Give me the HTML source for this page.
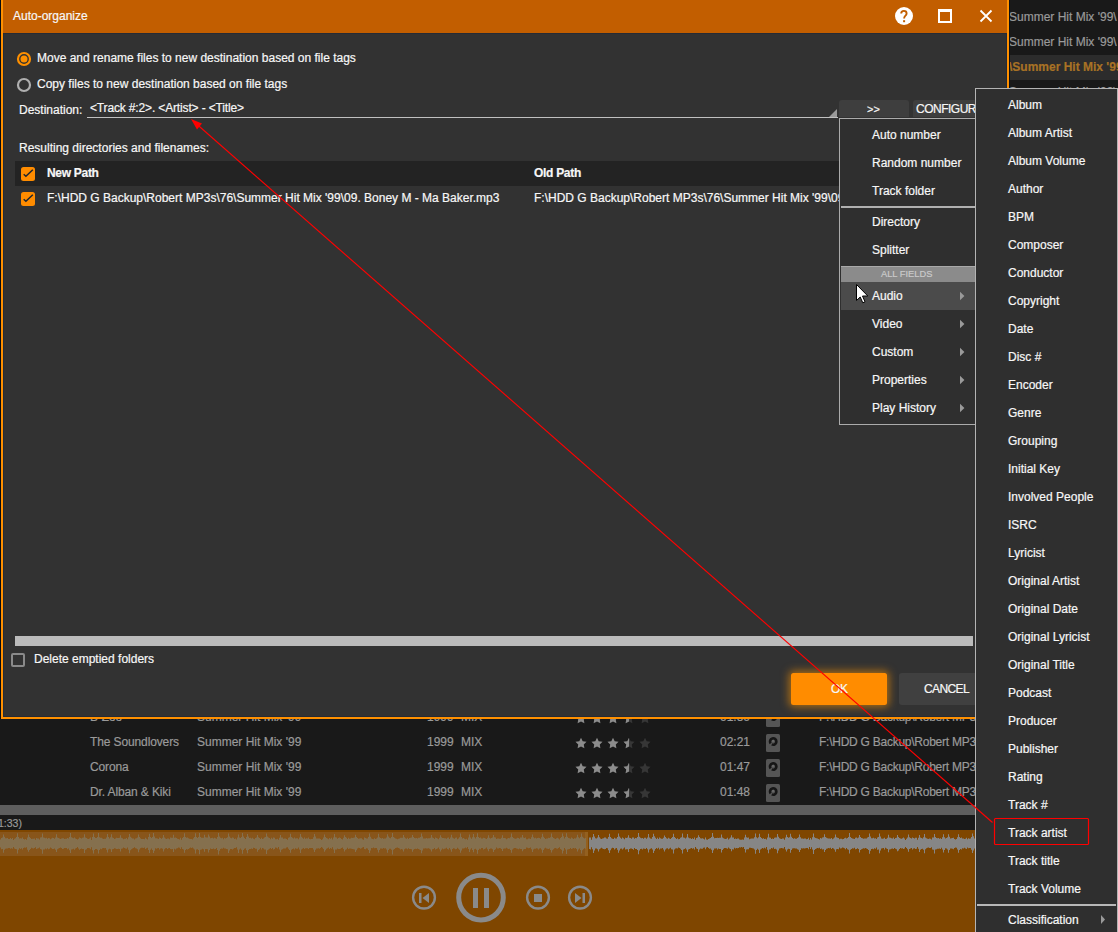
<!DOCTYPE html><html><head><meta charset="utf-8"><style>
*{margin:0;padding:0;box-sizing:border-box}
html,body{width:1118px;height:932px;overflow:hidden;background:#191919;font-family:"Liberation Sans",sans-serif;font-size:12px;color:#f7f7f7}
.t{position:absolute;line-height:14px;white-space:nowrap;-webkit-text-stroke:0.2px currentColor}
.g{color:#9a9a9a}
.b{font-weight:bold}
svg{position:absolute;overflow:visible}
</style></head><body>
<div class="t g" style="left:1009px;top:10px;letter-spacing:0">Summer Hit Mix '99\</div>
<div class="t g" style="left:1009px;top:35px;letter-spacing:0">Summer Hit Mix '99\</div>
<div style="position:absolute;left:1009px;top:55px;width:109px;height:25px;background:#2c2c2c"></div>
<div class="t b" style="left:1009px;top:60px;color:#a87225">\Summer Hit Mix '99\</div>
<div class="t g" style="left:1009px;top:85px;letter-spacing:0">Summer Hit Mix '99\</div>
<div class="t g" style="left:90px;top:710px;letter-spacing:-0.12px">B-Zoo</div>
<div class="t g" style="left:197px;top:710px;">Summer Hit Mix '99</div>
<div class="t g" style="left:427px;top:710px;">1999</div>
<div class="t g" style="left:461px;top:710px;">MIX</div>
<div class="t g" style="left:720px;top:710px;">01:50</div>
<div class="t g" style="left:819px;top:710px;letter-spacing:-0.25px">F:\HDD G Backup\Robert MP3s\76\Summer Hit Mix</div>
<div class="t g" style="left:90px;top:735px;letter-spacing:-0.12px">The Soundlovers</div>
<div class="t g" style="left:197px;top:735px;">Summer Hit Mix '99</div>
<div class="t g" style="left:427px;top:735px;">1999</div>
<div class="t g" style="left:461px;top:735px;">MIX</div>
<div class="t g" style="left:720px;top:735px;">02:21</div>
<div class="t g" style="left:819px;top:735px;letter-spacing:-0.25px">F:\HDD G Backup\Robert MP3s\76\Summer Hit Mix</div>
<div class="t g" style="left:90px;top:760px;letter-spacing:-0.12px">Corona</div>
<div class="t g" style="left:197px;top:760px;">Summer Hit Mix '99</div>
<div class="t g" style="left:427px;top:760px;">1999</div>
<div class="t g" style="left:461px;top:760px;">MIX</div>
<div class="t g" style="left:720px;top:760px;">01:47</div>
<div class="t g" style="left:819px;top:760px;letter-spacing:-0.25px">F:\HDD G Backup\Robert MP3s\76\Summer Hit Mix</div>
<div class="t g" style="left:90px;top:785px;letter-spacing:-0.12px">Dr. Alban &amp; Kiki</div>
<div class="t g" style="left:197px;top:785px;">Summer Hit Mix '99</div>
<div class="t g" style="left:427px;top:785px;">1999</div>
<div class="t g" style="left:461px;top:785px;">MIX</div>
<div class="t g" style="left:720px;top:785px;">01:48</div>
<div class="t g" style="left:819px;top:785px;letter-spacing:-0.25px">F:\HDD G Backup\Robert MP3s\76\Summer Hit Mix</div>
<svg style="left:0;top:0" width="1118" height="932"><polygon points="581.00,712.70 582.70,716.15 586.52,716.71 583.76,719.40 584.41,723.19 581.00,721.40 577.59,723.19 578.24,719.40 575.48,716.71 579.30,716.15" fill="#8c8c8c"/><polygon points="597.00,712.70 598.70,716.15 602.52,716.71 599.76,719.40 600.41,723.19 597.00,721.40 593.59,723.19 594.24,719.40 591.48,716.71 595.30,716.15" fill="#8c8c8c"/><polygon points="613.00,712.70 614.70,716.15 618.52,716.71 615.76,719.40 616.41,723.19 613.00,721.40 609.59,723.19 610.24,719.40 607.48,716.71 611.30,716.15" fill="#8c8c8c"/><defs><clipPath id="hc721"><rect x="622" y="710.5" width="7" height="16"/></clipPath></defs><polygon points="629.00,712.70 630.70,716.15 634.52,716.71 631.76,719.40 632.41,723.19 629.00,721.40 625.59,723.19 626.24,719.40 623.48,716.71 627.30,716.15" fill="#363636"/><g clip-path="url(#hc721)"><polygon points="629.00,712.70 630.70,716.15 634.52,716.71 631.76,719.40 632.41,723.19 629.00,721.40 625.59,723.19 626.24,719.40 623.48,716.71 627.30,716.15" fill="#8c8c8c"/></g><polygon points="645.00,712.70 646.70,716.15 650.52,716.71 647.76,719.40 648.41,723.19 645.00,721.40 641.59,723.19 642.24,719.40 639.48,716.71 643.30,716.15" fill="#363636"/><rect x="766" y="709" width="14" height="18" rx="1.5" fill="#555"/><path d="M770.6,718.4 A3.2,3.2 0 1 1 771.8,719.4" fill="none" stroke="#161616" stroke-width="2.6"/><rect x="772.3" y="715.2" width="1.5" height="1.5" fill="#777"/><polygon points="581.00,737.70 582.70,741.15 586.52,741.71 583.76,744.40 584.41,748.19 581.00,746.40 577.59,748.19 578.24,744.40 575.48,741.71 579.30,741.15" fill="#8c8c8c"/><polygon points="597.00,737.70 598.70,741.15 602.52,741.71 599.76,744.40 600.41,748.19 597.00,746.40 593.59,748.19 594.24,744.40 591.48,741.71 595.30,741.15" fill="#8c8c8c"/><polygon points="613.00,737.70 614.70,741.15 618.52,741.71 615.76,744.40 616.41,748.19 613.00,746.40 609.59,748.19 610.24,744.40 607.48,741.71 611.30,741.15" fill="#8c8c8c"/><defs><clipPath id="hc746"><rect x="622" y="735.5" width="7" height="16"/></clipPath></defs><polygon points="629.00,737.70 630.70,741.15 634.52,741.71 631.76,744.40 632.41,748.19 629.00,746.40 625.59,748.19 626.24,744.40 623.48,741.71 627.30,741.15" fill="#363636"/><g clip-path="url(#hc746)"><polygon points="629.00,737.70 630.70,741.15 634.52,741.71 631.76,744.40 632.41,748.19 629.00,746.40 625.59,748.19 626.24,744.40 623.48,741.71 627.30,741.15" fill="#8c8c8c"/></g><polygon points="645.00,737.70 646.70,741.15 650.52,741.71 647.76,744.40 648.41,748.19 645.00,746.40 641.59,748.19 642.24,744.40 639.48,741.71 643.30,741.15" fill="#363636"/><rect x="766" y="734" width="14" height="18" rx="1.5" fill="#555"/><path d="M770.6,743.4 A3.2,3.2 0 1 1 771.8,744.4" fill="none" stroke="#161616" stroke-width="2.6"/><rect x="772.3" y="740.2" width="1.5" height="1.5" fill="#777"/><polygon points="581.00,762.70 582.70,766.15 586.52,766.71 583.76,769.40 584.41,773.19 581.00,771.40 577.59,773.19 578.24,769.40 575.48,766.71 579.30,766.15" fill="#8c8c8c"/><polygon points="597.00,762.70 598.70,766.15 602.52,766.71 599.76,769.40 600.41,773.19 597.00,771.40 593.59,773.19 594.24,769.40 591.48,766.71 595.30,766.15" fill="#8c8c8c"/><polygon points="613.00,762.70 614.70,766.15 618.52,766.71 615.76,769.40 616.41,773.19 613.00,771.40 609.59,773.19 610.24,769.40 607.48,766.71 611.30,766.15" fill="#8c8c8c"/><defs><clipPath id="hc771"><rect x="622" y="760.5" width="7" height="16"/></clipPath></defs><polygon points="629.00,762.70 630.70,766.15 634.52,766.71 631.76,769.40 632.41,773.19 629.00,771.40 625.59,773.19 626.24,769.40 623.48,766.71 627.30,766.15" fill="#363636"/><g clip-path="url(#hc771)"><polygon points="629.00,762.70 630.70,766.15 634.52,766.71 631.76,769.40 632.41,773.19 629.00,771.40 625.59,773.19 626.24,769.40 623.48,766.71 627.30,766.15" fill="#8c8c8c"/></g><polygon points="645.00,762.70 646.70,766.15 650.52,766.71 647.76,769.40 648.41,773.19 645.00,771.40 641.59,773.19 642.24,769.40 639.48,766.71 643.30,766.15" fill="#363636"/><rect x="766" y="759" width="14" height="18" rx="1.5" fill="#555"/><path d="M770.6,768.4 A3.2,3.2 0 1 1 771.8,769.4" fill="none" stroke="#161616" stroke-width="2.6"/><rect x="772.3" y="765.2" width="1.5" height="1.5" fill="#777"/><polygon points="581.00,787.70 582.70,791.15 586.52,791.71 583.76,794.40 584.41,798.19 581.00,796.40 577.59,798.19 578.24,794.40 575.48,791.71 579.30,791.15" fill="#8c8c8c"/><polygon points="597.00,787.70 598.70,791.15 602.52,791.71 599.76,794.40 600.41,798.19 597.00,796.40 593.59,798.19 594.24,794.40 591.48,791.71 595.30,791.15" fill="#8c8c8c"/><polygon points="613.00,787.70 614.70,791.15 618.52,791.71 615.76,794.40 616.41,798.19 613.00,796.40 609.59,798.19 610.24,794.40 607.48,791.71 611.30,791.15" fill="#8c8c8c"/><defs><clipPath id="hc796"><rect x="622" y="785.5" width="7" height="16"/></clipPath></defs><polygon points="629.00,787.70 630.70,791.15 634.52,791.71 631.76,794.40 632.41,798.19 629.00,796.40 625.59,798.19 626.24,794.40 623.48,791.71 627.30,791.15" fill="#363636"/><g clip-path="url(#hc796)"><polygon points="629.00,787.70 630.70,791.15 634.52,791.71 631.76,794.40 632.41,798.19 629.00,796.40 625.59,798.19 626.24,794.40 623.48,791.71 627.30,791.15" fill="#8c8c8c"/></g><polygon points="645.00,787.70 646.70,791.15 650.52,791.71 647.76,794.40 648.41,798.19 645.00,796.40 641.59,798.19 642.24,794.40 639.48,791.71 643.30,791.15" fill="#363636"/><rect x="766" y="784" width="14" height="18" rx="1.5" fill="#555"/><path d="M770.6,793.4 A3.2,3.2 0 1 1 771.8,794.4" fill="none" stroke="#161616" stroke-width="2.6"/><rect x="772.3" y="790.2" width="1.5" height="1.5" fill="#777"/></svg>
<div style="position:absolute;left:0px;top:805px;width:975px;height:10px;background:#5e5e5e"></div>
<div class="t g" style="left:-2px;top:816px;font-size:10.5px">1:33)</div>
<div style="position:absolute;left:0px;top:830px;width:975px;height:102px;background:#7f4600"></div>
<div style="position:absolute;left:0px;top:832px;width:588px;height:24px;background:#88551a"></div>
<div style="position:absolute;left:585px;top:832px;width:3px;height:24px;background:#93601f"></div>
<svg style="left:0;top:0" width="1118" height="932"><path d="M0,839.6 1,839.6 1,837.9 2,837.9 2,837.5 3,837.5 3,834.4 4,834.4 4,836.7 5,836.7 5,838.2 6,838.2 6,838.3 7,838.3 7,838.0 8,838.0 8,839.1 9,839.1 9,839.1 10,839.1 10,837.9 11,837.9 11,838.9 12,838.9 12,838.1 13,838.1 13,839.9 14,839.9 14,838.8 15,838.8 15,838.2 16,838.2 16,837.1 17,837.1 17,833.3 18,833.3 18,837.0 19,837.0 19,838.4 20,838.4 20,838.2 21,838.2 21,838.6 22,838.6 22,837.6 23,837.6 23,839.0 24,839.0 24,839.4 25,839.4 25,838.9 26,838.9 26,839.8 27,839.8 27,837.5 28,837.5 28,834.6 29,834.6 29,837.0 30,837.0 30,838.0 31,838.0 31,839.0 32,839.0 32,838.8 33,838.8 33,838.8 34,838.8 34,838.5 35,838.5 35,839.8 36,839.8 36,837.9 37,837.9 37,838.6 38,838.6 38,838.4 39,838.4 39,839.5 40,839.5 40,837.5 41,837.5 41,837.3 42,837.3 42,833.6 43,833.6 43,837.4 44,837.4 44,837.7 45,837.7 45,838.2 46,838.2 46,837.7 47,837.7 47,838.7 48,838.7 48,837.9 49,837.9 49,838.3 50,838.3 50,839.2 51,839.2 51,838.5 52,838.5 52,837.8 53,837.8 53,837.9 54,837.9 54,838.7 55,838.7 55,837.5 56,837.5 56,834.2 57,834.2 57,837.4 58,837.4 58,838.0 59,838.0 59,838.5 60,838.5 60,839.1 61,839.1 61,838.6 62,838.6 62,838.2 63,838.2 63,838.3 64,838.3 64,839.0 65,839.0 65,838.8 66,838.8 66,838.7 67,838.7 67,838.0 68,838.0 68,838.6 69,838.6 69,837.0 70,837.0 70,832.9 71,832.9 71,837.2 72,837.2 72,837.8 73,837.8 73,838.2 74,838.2 74,837.5 75,837.5 75,838.5 76,838.5 76,839.0 77,839.0 77,839.5 78,839.5 78,838.7 79,838.7 79,837.5 80,837.5 80,838.1 81,838.1 81,838.6 82,838.6 82,837.8 83,837.8 83,837.5 84,837.5 84,834.2 85,834.2 85,837.6 86,837.6 86,838.1 87,838.1 87,838.8 88,838.8 88,839.0 89,839.0 89,838.6 90,838.6 90,837.6 91,837.6 91,839.9 92,839.9 92,837.0 93,837.0 93,833.5 94,833.5 94,836.9 95,836.9 95,838.0 96,838.0 96,838.0 97,838.0 97,837.1 98,837.1 98,832.9 99,832.9 99,837.2 100,837.2 100,837.8 101,837.8 101,837.8 102,837.8 102,838.5 103,838.5 103,839.1 104,839.1 104,838.7 105,838.7 105,838.7 106,838.7 106,837.5 107,837.5 107,834.0 108,834.0 108,836.9 109,836.9 109,838.4 110,838.4 110,837.3 111,837.3 111,834.3 112,834.3 112,837.4 113,837.4 113,838.0 114,838.0 114,838.9 115,838.9 115,838.5 116,838.5 116,837.8 117,837.8 117,838.0 118,838.0 118,838.0 119,838.0 119,837.7 120,837.7 120,835.3 121,835.3 121,837.8 122,837.8 122,838.3 123,838.3 123,839.2 124,839.2 124,838.8 125,838.8 125,838.7 126,838.7 126,838.1 127,838.1 127,839.3 128,839.3 128,837.2 129,837.2 129,834.0 130,834.0 130,836.8 131,836.8 131,837.7 132,837.7 132,838.5 133,838.5 133,838.6 134,838.6 134,839.4 135,839.4 135,838.5 136,838.5 136,838.2 137,838.2 137,837.5 138,837.5 138,834.4 139,834.4 139,837.1 140,837.1 140,838.2 141,838.2 141,839.0 142,839.0 142,838.9 143,838.9 143,839.0 144,839.0 144,839.3 145,839.3 145,837.7 146,837.7 146,838.7 147,838.7 147,839.4 148,839.4 148,837.0 149,837.0 149,833.8 150,833.8 150,837.0 151,837.0 151,838.0 152,838.0 152,837.0 153,837.0 153,833.0 154,833.0 154,836.4 155,836.4 155,838.2 156,838.2 156,838.3 157,838.3 157,838.5 158,838.5 158,839.0 159,839.0 159,837.6 160,837.6 160,838.0 161,838.0 161,838.7 162,838.7 162,837.7 163,837.7 163,835.1 164,835.1 164,837.5 165,837.5 165,838.5 166,838.5 166,838.9 167,838.9 167,838.4 168,838.4 168,838.6 169,838.6 169,839.2 170,839.2 170,837.6 171,837.6 171,837.8 172,837.8 172,837.7 173,837.7 173,834.7 174,834.7 174,837.8 175,837.8 175,837.6 176,837.6 176,838.1 177,838.1 177,838.7 178,838.7 178,839.1 179,839.1 179,839.4 180,839.4 180,837.8 181,837.8 181,839.8 182,839.8 182,837.9 183,837.9 183,837.1 184,837.1 184,833.2 185,833.2 185,837.0 186,837.0 186,837.8 187,837.8 187,837.6 188,837.6 188,838.2 189,838.2 189,838.7 190,838.7 190,839.0 191,839.0 191,839.1 192,839.1 192,839.4 193,839.4 193,838.3 194,838.3 194,837.0 195,837.0 195,833.2 196,833.2 196,837.1 197,837.1 197,837.9 198,837.9 198,837.1 199,837.1 199,833.1 200,833.1 200,837.0 201,837.0 201,837.8 202,837.8 202,837.7 203,837.7 203,837.7 204,837.7 204,834.8 205,834.8 205,837.3 206,837.3 206,837.5 207,837.5 207,837.4 208,837.4 208,834.5 209,834.5 209,836.6 210,836.6 210,838.3 211,838.3 211,837.9 212,837.9 212,837.7 213,837.7 213,838.5 214,838.5 214,837.8 215,837.8 215,838.3 216,838.3 216,838.7 217,838.7 217,837.0 218,837.0 218,832.9 219,832.9 219,836.4 220,836.4 220,837.7 221,837.7 221,838.2 222,838.2 222,837.7 223,837.7 223,839.3 224,839.3 224,838.1 225,838.1 225,838.5 226,838.5 226,837.9 227,837.9 227,837.2 228,837.2 228,833.4 229,833.4 229,836.6 230,836.6 230,837.8 231,837.8 231,838.2 232,838.2 232,837.6 233,837.6 233,837.8 234,837.8 234,839.0 235,839.0 235,838.6 236,838.6 236,839.6 237,839.6 237,837.4 238,837.4 238,834.5 239,834.5 239,837.4 240,837.4 240,838.0 241,838.0 241,837.1 242,837.1 242,833.1 243,833.1 243,836.6 244,836.6 244,837.9 245,837.9 245,838.9 246,838.9 246,837.1 247,837.1 247,833.9 248,833.9 248,836.5 249,836.5 249,838.1 250,838.1 250,837.8 251,837.8 251,838.5 252,838.5 252,837.7 253,837.7 253,838.8 254,838.8 254,839.2 255,839.2 255,838.0 256,838.0 256,837.6 257,837.6 257,835.1 258,835.1 258,837.3 259,837.3 259,837.9 260,837.9 260,839.0 261,839.0 261,837.8 262,837.8 262,839.1 263,839.1 263,838.6 264,838.6 264,837.5 265,837.5 265,837.1 266,837.1 266,833.4 267,833.4 267,836.5 268,836.5 268,837.6 269,837.6 269,838.1 270,838.1 270,839.2 271,839.2 271,837.7 272,837.7 272,838.7 273,838.7 273,837.6 274,837.6 274,837.7 275,837.7 275,839.2 276,839.2 276,839.3 277,839.3 277,838.8 278,838.8 278,839.7 279,839.7 279,837.7 280,837.7 280,834.9 281,834.9 281,837.4 282,837.4 282,837.5 283,837.5 283,838.8 284,838.8 284,838.5 285,838.5 285,838.5 286,838.5 286,839.1 287,839.1 287,839.7 288,839.7 288,837.7 289,837.7 289,837.2 290,837.2 290,833.7 291,833.7 291,836.9 292,836.9 292,837.8 293,837.8 293,838.4 294,838.4 294,837.5 295,837.5 295,838.6 296,838.6 296,838.2 297,838.2 297,838.3 298,838.3 298,839.3 299,839.3 299,837.4 300,837.4 300,834.1 301,834.1 301,836.7 302,836.7 302,837.8 303,837.8 303,838.8 304,838.8 304,837.5 305,837.5 305,838.8 306,838.8 306,838.3 307,838.3 307,838.4 308,838.4 308,837.6 309,837.6 309,839.0 310,839.0 310,839.2 311,839.2 311,839.1 312,839.1 312,839.1 313,839.1 313,837.3 314,837.3 314,834.0 315,834.0 315,836.5 316,836.5 316,838.5 317,838.5 317,838.5 318,838.5 318,838.4 319,838.4 319,838.5 320,838.5 320,838.9 321,838.9 321,839.9 322,839.9 322,839.3 323,839.3 323,837.4 324,837.4 324,834.6 325,834.6 325,837.0 326,837.0 326,838.0 327,838.0 327,838.4 328,838.4 328,839.2 329,839.2 329,838.0 330,838.0 330,838.7 331,838.7 331,837.8 332,837.8 332,839.5 333,839.5 333,837.4 334,837.4 334,834.0 335,834.0 335,837.2 336,837.2 336,837.6 337,837.6 337,838.7 338,838.7 338,838.0 339,838.0 339,837.5 340,837.5 340,837.9 341,837.9 341,839.1 342,839.1 342,839.6 343,839.6 343,837.7 344,837.7 344,835.3 345,835.3 345,836.9 346,836.9 346,837.8 347,837.8 347,838.9 348,838.9 348,837.7 349,837.7 349,838.7 350,838.7 350,838.5 351,838.5 351,837.7 352,837.7 352,838.0 353,838.0 353,837.7 354,837.7 354,837.6 355,837.6 355,834.7 356,834.7 356,837.0 357,837.0 357,838.1 358,838.1 358,838.8 359,838.8 359,838.6 360,838.6 360,838.2 361,838.2 361,838.3 362,838.3 362,839.3 363,839.3 363,839.7 364,839.7 364,837.6 365,837.6 365,838.0 366,838.0 366,838.6 367,838.6 367,838.6 368,838.6 368,837.0 369,837.0 369,833.4 370,833.4 370,836.8 371,836.8 371,838.5 372,838.5 372,838.9 373,838.9 373,839.2 374,839.2 374,838.3 375,838.3 375,838.9 376,838.9 376,838.5 377,838.5 377,837.4 378,837.4 378,833.8 379,833.8 379,837.2 380,837.2 380,838.0 381,838.0 381,838.4 382,838.4 382,837.9 383,837.9 383,838.8 384,838.8 384,838.5 385,838.5 385,838.4 386,838.4 386,837.4 387,837.4 387,834.3 388,834.3 388,836.6 389,836.6 389,837.7 390,837.7 390,838.3 391,838.3 391,837.0 392,837.0 392,833.0 393,833.0 393,837.0 394,837.0 394,837.8 395,837.8 395,838.4 396,838.4 396,838.8 397,838.8 397,839.2 398,839.2 398,838.8 399,838.8 399,838.6 400,838.6 400,837.7 401,837.7 401,837.7 402,837.7 402,837.7 403,837.7 403,835.0 404,835.0 404,837.2 405,837.2 405,838.3 406,838.3 406,838.7 407,838.7 407,837.8 408,837.8 408,839.0 409,839.0 409,838.1 410,838.1 410,837.8 411,837.8 411,837.6 412,837.6 412,835.1 413,835.1 413,837.1 414,837.1 414,837.9 415,837.9 415,838.2 416,838.2 416,838.1 417,838.1 417,838.5 418,838.5 418,837.8 419,837.8 419,837.7 420,837.7 420,837.1 421,837.1 421,833.5 422,833.5 422,836.5 423,836.5 423,838.5 424,838.5 424,838.4 425,838.4 425,838.5 426,838.5 426,838.1 427,838.1 427,838.6 428,838.6 428,838.3 429,838.3 429,838.2 430,838.2 430,837.7 431,837.7 431,835.0 432,835.0 432,837.6 433,837.6 433,838.0 434,838.0 434,839.1 435,839.1 435,837.5 436,837.5 436,838.0 437,838.0 437,838.4 438,838.4 438,839.3 439,839.3 439,837.7 440,837.7 440,835.2 441,835.2 441,837.3 442,837.3 442,838.0 443,838.0 443,837.9 444,837.9 444,838.3 445,838.3 445,838.2 446,838.2 446,838.8 447,838.8 447,837.7 448,837.7 448,837.6 449,837.6 449,839.0 450,839.0 450,837.6 451,837.6 451,834.7 452,834.7 452,837.4 453,837.4 453,838.3 454,838.3 454,838.7 455,838.7 455,837.7 456,837.7 456,837.6 457,837.6 457,839.3 458,839.3 458,838.5 459,838.5 459,837.2 460,837.2 460,833.6 461,833.6 461,836.9 462,836.9 462,838.5 463,838.5 463,838.1 464,838.1 464,838.8 465,838.8 465,839.3 466,839.3 466,838.7 467,838.7 467,839.8 468,839.8 468,837.5 469,837.5 469,834.6 470,834.6 470,837.4 471,837.4 471,838.7 472,838.7 472,837.3 473,837.3 473,833.9 474,833.9 474,837.3 475,837.3 475,838.5 476,838.5 476,837.1 477,837.1 477,833.2 478,833.2 478,837.1 479,837.1 479,837.9 480,837.9 480,837.6 481,837.6 481,838.6 482,838.6 482,838.6 483,838.6 483,837.8 484,837.8 484,838.1 485,838.1 485,838.5 486,838.5 486,839.0 487,839.0 487,837.8 488,837.8 488,835.3 489,835.3 489,837.8 490,837.8 490,838.6 491,838.6 491,838.1 492,838.1 492,837.5 493,837.5 493,834.9 494,834.9 494,837.2 495,837.2 495,837.6 496,837.6 496,839.1 497,839.1 497,838.5 498,838.5 498,838.5 499,838.5 499,838.8 500,838.8 500,838.7 501,838.7 501,837.7 502,837.7 502,835.2 503,835.2 503,837.9 504,837.9 504,838.0 505,838.0 505,838.3 506,838.3 506,839.2 507,839.2 507,838.5 508,838.5 508,838.0 509,838.0 509,838.3 510,838.3 510,837.3 511,837.3 511,833.6 512,833.6 512,837.1 513,837.1 513,838.0 514,838.0 514,838.6 515,838.6 515,838.8 516,838.8 516,838.5 517,838.5 517,837.8 518,837.8 518,837.9 519,837.9 519,838.7 520,838.7 520,837.5 521,837.5 521,837.5 522,837.5 522,834.9 523,834.9 523,837.4 524,837.4 524,838.1 525,838.1 525,837.5 526,837.5 526,839.2 527,839.2 527,839.2 528,839.2 528,838.4 529,838.4 529,838.6 530,838.6 530,839.0 531,839.0 531,837.3 532,837.3 532,834.4 533,834.4 533,837.3 534,837.3 534,838.2 535,838.2 535,837.8 536,837.8 536,838.5 537,838.5 537,838.1 538,838.1 538,837.7 539,837.7 539,838.1 540,838.1 540,838.7 541,838.7 541,837.3 542,837.3 542,833.8 543,833.8 543,836.8 544,836.8 544,838.0 545,838.0 545,838.9 546,838.9 546,838.4 547,838.4 547,838.4 548,838.4 548,837.7 549,837.7 549,838.0 550,838.0 550,837.2 551,837.2 551,833.5 552,833.5 552,836.9 553,836.9 553,837.9 554,837.9 554,838.4 555,838.4 555,839.0 556,839.0 556,838.2 557,838.2 557,837.8 558,837.8 558,838.6 559,838.6 559,839.5 560,839.5 560,837.9 561,837.9 561,837.1 562,837.1 562,833.6 563,833.6 563,836.3 564,836.3 564,838.5 565,838.5 565,837.0 566,837.0 566,833.2 567,833.2 567,836.8 568,836.8 568,838.0 569,838.0 569,838.2 570,838.2 570,838.7 571,838.7 571,837.6 572,837.6 572,838.2 573,838.2 573,838.9 574,838.9 574,838.2 575,838.2 575,838.4 576,838.4 576,837.6 577,837.6 577,834.8 578,834.8 578,837.3 579,837.3 579,838.3 580,838.3 580,837.1 581,837.1 581,833.4 582,833.4 582,836.8 583,836.8 583,837.8 584,837.8 584,838.6 585,838.6 585,838.1 586,838.1 586,848.7 585,848.7 585,848.2 584,848.2 584,849.3 583,849.3 583,850.2 582,850.2 582,853.5 581,853.5 581,850.1 580,850.1 580,848.5 579,848.5 579,849.4 578,849.4 578,851.6 577,851.6 577,849.1 576,849.1 576,848.1 575,848.1 575,848.4 574,848.4 574,847.9 573,847.9 573,848.4 572,848.4 572,849.0 571,849.0 571,848.0 570,848.0 570,848.9 569,848.9 569,849.2 568,849.2 568,849.6 567,849.6 567,853.9 566,853.9 566,849.5 565,849.5 565,848.1 564,848.1 564,850.7 563,850.7 563,853.6 562,853.6 562,849.7 561,849.7 561,849.0 560,849.0 560,847.3 559,847.3 559,848.1 558,848.1 558,848.7 557,848.7 557,848.4 556,848.4 556,848.1 555,848.1 555,848.2 554,848.2 554,849.3 553,849.3 553,850.2 552,850.2 552,852.6 551,852.6 551,850.0 550,850.0 550,848.6 549,848.6 549,849.0 548,849.0 548,848.7 547,848.7 547,848.6 546,848.6 546,847.7 545,847.7 545,848.4 544,848.4 544,849.9 543,849.9 543,852.7 542,852.7 542,849.5 541,849.5 541,848.2 540,848.2 540,848.6 539,848.6 539,849.4 538,849.4 538,848.5 537,848.5 537,848.2 536,848.2 536,848.8 535,848.8 535,848.7 534,848.7 534,849.4 533,849.4 533,852.0 532,852.0 532,849.2 531,849.2 531,847.5 530,847.5 530,847.9 529,847.9 529,848.3 528,848.3 528,847.7 527,847.7 527,847.4 526,847.4 526,848.9 525,848.9 525,849.0 524,849.0 524,849.6 523,849.6 523,851.3 522,851.3 522,848.9 521,848.9 521,848.9 520,848.9 520,848.6 519,848.6 519,849.3 518,849.3 518,848.8 517,848.8 517,848.4 516,848.4 516,848.1 515,848.1 515,848.0 514,848.0 514,848.6 513,848.6 513,849.6 512,849.6 512,852.8 511,852.8 511,850.0 510,850.0 510,848.8 509,848.8 509,849.0 508,849.0 508,848.6 507,848.6 507,847.7 506,847.7 506,848.6 505,848.6 505,848.6 504,848.6 504,848.8 503,848.8 503,851.0 502,851.0 502,849.0 501,849.0 501,848.2 500,848.2 500,848.0 499,848.0 499,848.4 498,848.4 498,848.5 497,848.5 497,847.6 496,847.6 496,849.3 495,849.3 495,850.0 494,850.0 494,852.0 493,852.0 493,849.2 492,849.2 492,848.4 491,848.4 491,848.4 490,848.4 490,849.0 489,849.0 489,851.2 488,851.2 488,849.3 487,849.3 487,847.6 486,847.6 486,848.6 485,848.6 485,849.0 484,849.0 484,849.4 483,849.4 483,848.0 482,848.0 482,848.1 481,848.1 481,849.2 480,849.2 480,848.8 479,848.8 479,849.9 478,849.9 478,853.7 477,853.7 477,849.8 476,849.8 476,848.7 475,848.7 475,849.3 474,849.3 474,852.3 473,852.3 473,849.9 472,849.9 472,848.2 471,848.2 471,849.5 470,849.5 470,852.1 469,852.1 469,849.1 468,849.1 468,847.0 467,847.0 467,848.2 466,848.2 466,847.6 465,847.6 465,848.2 464,848.2 464,848.5 463,848.5 463,848.5 462,848.5 462,850.4 461,850.4 461,852.7 460,852.7 460,849.8 459,849.8 459,848.8 458,848.8 458,847.7 457,847.7 457,848.9 456,848.9 456,849.3 455,849.3 455,848.5 454,848.5 454,848.3 453,848.3 453,849.0 452,849.0 452,851.7 451,851.7 451,849.6 450,849.6 450,848.1 449,848.1 449,849.4 448,849.4 448,849.0 447,849.0 447,847.7 446,847.7 446,848.5 445,848.5 445,848.7 444,848.7 444,849.2 443,849.2 443,848.4 442,848.4 442,849.8 441,849.8 441,851.4 440,851.4 440,849.3 439,849.3 439,847.6 438,847.6 438,848.4 437,848.4 437,849.0 436,849.0 436,849.5 435,849.5 435,848.0 434,848.0 434,849.1 433,849.1 433,849.2 432,849.2 432,851.5 431,851.5 431,849.5 430,849.5 430,848.7 429,848.7 429,848.2 428,848.2 428,848.4 427,848.4 427,848.6 426,848.6 426,848.2 425,848.2 425,848.6 424,848.6 424,848.6 423,848.6 423,850.4 422,850.4 422,853.3 421,853.3 421,849.9 420,849.9 420,849.4 419,849.4 419,849.0 418,849.0 418,848.4 417,848.4 417,849.0 416,849.0 416,848.7 415,848.7 415,849.1 414,849.1 414,849.7 413,849.7 413,851.7 412,851.7 412,849.3 411,849.3 411,849.1 410,849.1 410,849.1 409,849.1 409,848.2 408,848.2 408,849.3 407,849.3 407,848.4 406,848.4 406,848.5 405,848.5 405,849.3 404,849.3 404,851.6 403,851.6 403,849.4 402,849.4 402,849.1 401,849.1 401,849.5 400,849.5 400,848.4 399,848.4 399,848.1 398,848.1 398,847.4 397,847.4 397,847.8 396,847.8 396,848.1 395,848.1 395,849.1 394,849.1 394,849.8 393,849.8 393,854.4 392,854.4 392,849.7 391,849.7 391,848.7 390,848.7 390,848.8 389,848.8 389,849.9 388,849.9 388,852.7 387,852.7 387,849.4 386,849.4 386,848.3 385,848.3 385,848.4 384,848.4 384,847.9 383,847.9 383,848.7 382,848.7 382,848.5 381,848.5 381,848.5 380,848.5 380,850.0 379,850.0 379,852.4 378,852.4 378,849.7 377,849.7 377,848.0 376,848.0 376,848.0 375,848.0 375,848.3 374,848.3 374,847.4 373,847.4 373,848.3 372,848.3 372,848.0 371,848.0 371,850.5 370,850.5 370,852.9 369,852.9 369,850.0 368,850.0 368,848.6 367,848.6 367,848.2 366,848.2 366,849.3 365,849.3 365,848.9 364,848.9 364,847.0 363,847.0 363,847.5 362,847.5 362,848.3 361,848.3 361,848.8 360,848.8 360,848.0 359,848.0 359,847.8 358,847.8 358,848.5 357,848.5 357,850.3 356,850.3 356,852.0 355,852.0 355,849.6 354,849.6 354,849.3 353,849.3 353,849.0 352,849.0 352,848.7 351,848.7 351,848.6 350,848.6 350,848.4 349,848.4 349,849.0 348,849.0 348,847.7 347,847.7 347,849.3 346,849.3 346,849.8 345,849.8 345,851.5 344,851.5 344,848.9 343,848.9 343,847.5 342,847.5 342,848.0 341,848.0 341,848.8 340,848.8 340,848.9 339,848.9 339,849.1 338,849.1 338,848.5 337,848.5 337,849.6 336,849.6 336,849.4 335,849.4 335,853.1 334,853.1 334,849.4 333,849.4 333,847.2 332,847.2 332,848.8 331,848.8 331,848.0 330,848.0 330,849.1 329,849.1 329,847.6 328,847.6 328,848.2 327,848.2 327,848.7 326,848.7 326,850.3 325,850.3 325,851.8 324,851.8 324,849.0 323,849.0 323,847.7 322,847.7 322,847.1 321,847.1 321,848.0 320,848.0 320,848.8 319,848.8 319,848.3 318,848.3 318,848.6 317,848.6 317,848.4 316,848.4 316,849.8 315,849.8 315,852.1 314,852.1 314,849.6 313,849.6 313,848.0 312,848.0 312,848.1 311,848.1 311,847.9 310,847.9 310,847.9 309,847.9 309,849.1 308,849.1 308,848.2 307,848.2 307,848.3 306,848.3 306,848.3 305,848.3 305,849.1 304,849.1 304,848.0 303,848.0 303,848.8 302,848.8 302,849.6 301,849.6 301,853.1 300,853.1 300,849.5 299,849.5 299,847.6 298,847.6 298,848.8 297,848.8 297,848.7 296,848.7 296,848.3 295,848.3 295,849.4 294,849.4 294,848.6 293,848.6 293,849.1 292,849.1 292,849.8 291,849.8 291,852.8 290,852.8 290,850.0 289,850.0 289,848.7 288,848.7 288,847.2 287,847.2 287,847.5 286,847.5 286,848.5 285,848.5 285,848.6 284,848.6 284,848.4 283,848.4 283,849.2 282,849.2 282,849.7 281,849.7 281,852.2 280,852.2 280,849.5 279,849.5 279,847.1 278,847.1 278,848.4 277,848.4 277,847.7 276,847.7 276,847.5 275,847.5 275,849.0 274,849.0 274,849.4 273,849.4 273,848.1 272,848.1 272,849.1 271,849.1 271,848.0 270,848.0 270,848.8 269,848.8 269,849.6 268,849.6 268,850.3 267,850.3 267,854.0 266,854.0 266,849.6 265,849.6 265,849.5 264,849.5 264,848.6 263,848.6 263,848.0 262,848.0 262,849.5 261,849.5 261,847.8 260,847.8 260,849.2 259,849.2 259,850.0 258,850.0 258,851.7 257,851.7 257,848.8 256,848.8 256,848.7 255,848.7 255,847.9 254,847.9 254,847.8 253,847.8 253,848.9 252,848.9 252,848.6 251,848.6 251,849.1 250,849.1 250,849.1 249,849.1 249,849.9 248,849.9 248,853.3 247,853.3 247,850.2 246,850.2 246,848.2 245,848.2 245,848.8 244,848.8 244,849.9 243,849.9 243,853.7 242,853.7 242,849.7 241,849.7 241,848.6 240,848.6 240,849.5 239,849.5 239,852.9 238,852.9 238,849.4 237,849.4 237,847.2 236,847.2 236,848.0 235,848.0 235,848.0 234,848.0 234,848.7 233,848.7 233,849.6 232,849.6 232,849.0 231,849.0 231,849.1 230,849.1 230,850.6 229,850.6 229,852.9 228,852.9 228,849.3 227,849.3 227,848.9 226,848.9 226,848.5 225,848.5 225,848.5 224,848.5 224,847.8 223,847.8 223,848.8 222,848.8 222,848.5 221,848.5 221,849.1 220,849.1 220,850.7 219,850.7 219,854.6 218,854.6 218,850.1 217,850.1 217,848.1 216,848.1 216,848.9 215,848.9 215,849.2 214,849.2 214,848.5 213,848.5 213,849.0 212,849.0 212,849.1 211,849.1 211,848.6 210,848.6 210,850.1 209,850.1 209,852.6 208,852.6 208,849.2 207,849.2 207,849.0 206,849.0 206,849.1 205,849.1 205,851.7 204,851.7 204,849.3 203,849.3 203,848.8 202,848.8 202,849.4 201,849.4 201,849.8 200,849.8 200,854.2 199,854.2 199,850.0 198,850.0 198,849.3 197,849.3 197,849.4 196,849.4 196,853.6 195,853.6 195,849.5 194,849.5 194,848.4 193,848.4 193,847.6 192,847.6 192,848.1 191,848.1 191,847.6 190,847.6 190,848.3 189,848.3 189,849.0 188,849.0 188,849.6 187,849.6 187,848.9 186,848.9 186,850.1 185,850.1 185,852.8 184,852.8 184,849.5 183,849.5 183,849.1 182,849.1 182,847.2 181,847.2 181,849.1 180,849.1 180,847.7 179,847.7 179,847.6 178,847.6 178,848.2 177,848.2 177,848.5 176,848.5 176,849.5 175,849.5 175,848.7 174,848.7 174,852.1 173,852.1 173,849.0 172,849.0 172,849.2 171,849.2 171,849.0 170,849.0 170,847.9 169,847.9 169,848.2 168,848.2 168,848.9 167,848.9 167,848.1 166,848.1 166,848.2 165,848.2 165,849.2 164,849.2 164,851.4 163,851.4 163,848.7 162,848.7 162,848.2 161,848.2 161,848.6 160,848.6 160,849.4 159,849.4 159,848.0 158,848.0 158,848.3 157,848.3 157,848.8 156,848.8 156,848.3 155,848.3 155,850.8 154,850.8 154,853.1 153,853.1 153,849.9 152,849.9 152,848.6 151,848.6 151,849.8 150,849.8 150,853.0 149,853.0 149,849.9 148,849.9 148,847.7 147,847.7 147,848.2 146,848.2 146,848.9 145,848.9 145,847.6 144,847.6 144,848.1 143,848.1 143,847.8 142,847.8 142,847.7 141,847.7 141,848.3 140,848.3 140,849.4 139,849.4 139,852.3 138,852.3 138,849.2 137,849.2 137,848.6 136,848.6 136,848.2 135,848.2 135,847.3 134,847.3 134,848.1 133,848.1 133,848.5 132,848.5 132,849.3 131,849.3 131,850.3 130,850.3 130,853.3 129,853.3 129,849.7 128,849.7 128,847.4 127,847.4 127,848.7 126,848.7 126,848.4 125,848.4 125,847.9 124,847.9 124,847.6 123,847.6 123,848.5 122,848.5 122,848.8 121,848.8 121,851.4 120,851.4 120,849.1 119,849.1 119,848.8 118,848.8 118,848.9 117,848.9 117,848.9 116,848.9 116,848.5 115,848.5 115,848.3 114,848.3 114,848.9 113,848.9 113,849.3 112,849.3 112,852.1 111,852.1 111,849.3 110,849.3 110,848.8 109,848.8 109,849.5 108,849.5 108,852.4 107,852.4 107,849.8 106,849.8 106,848.1 105,848.1 105,848.3 104,848.3 104,847.9 103,847.9 103,848.3 102,848.3 102,849.2 101,849.2 101,848.7 100,848.7 100,849.9 99,849.9 99,853.4 98,853.4 98,849.8 97,849.8 97,849.0 96,849.0 96,849.0 95,849.0 95,850.1 94,850.1 94,853.6 93,853.6 93,850.3 92,850.3 92,847.2 91,847.2 91,849.2 90,849.2 90,848.3 89,848.3 89,848.0 88,848.0 88,847.9 87,847.9 87,849.2 86,849.2 86,849.7 85,849.7 85,853.0 84,853.0 84,849.1 83,849.1 83,848.9 82,848.9 82,848.4 81,848.4 81,849.1 80,849.1 80,849.7 79,849.7 79,848.4 78,848.4 78,847.1 77,847.1 77,847.9 76,847.9 76,848.4 75,848.4 75,849.7 74,849.7 74,848.8 73,848.8 73,849.2 72,849.2 72,849.6 71,849.6 71,853.1 70,853.1 70,850.2 69,850.2 69,848.5 68,848.5 68,849.2 67,849.2 67,848.0 66,848.0 66,847.9 65,847.9 65,848.1 64,848.1 64,848.7 63,848.7 63,848.9 62,848.9 62,848.1 61,848.1 61,847.5 60,847.5 60,848.0 59,848.0 59,848.6 58,848.6 58,849.3 57,849.3 57,852.1 56,852.1 56,849.7 55,849.7 55,848.5 54,848.5 54,849.1 53,849.1 53,849.1 52,849.1 52,848.3 51,848.3 51,847.5 50,847.5 50,848.8 49,848.8 49,849.2 48,849.2 48,848.2 47,848.2 47,849.2 46,849.2 46,848.6 45,848.6 45,849.4 44,849.4 44,849.6 43,849.6 43,853.8 42,853.8 42,849.4 41,849.4 41,849.0 40,849.0 40,847.6 39,847.6 39,848.3 38,848.3 38,848.6 37,848.6 37,848.9 36,848.9 36,847.3 35,847.3 35,848.0 34,848.0 34,848.4 33,848.4 33,848.3 32,848.3 32,847.8 31,847.8 31,848.9 30,848.9 30,850.0 29,850.0 29,851.7 28,851.7 28,849.7 27,849.7 27,847.2 26,847.2 26,847.7 25,847.7 25,847.5 24,847.5 24,848.0 23,848.0 23,849.4 22,849.4 22,848.2 21,848.2 21,848.9 20,848.9 20,848.3 19,848.3 19,849.7 18,849.7 18,853.4 17,853.4 17,849.3 16,849.3 16,848.9 15,848.9 15,848.4 14,848.4 14,847.1 13,847.1 13,848.7 12,848.7 12,848.3 11,848.3 11,848.8 10,848.8 10,848.1 9,848.1 9,848.0 8,848.0 8,848.6 7,848.6 7,848.4 6,848.4 6,848.7 5,848.7 5,849.8 4,849.8 4,852.8 3,852.8 3,849.1 2,849.1 2,849.3 1,849.3 1,847.5 0,847.5Z" fill="#85704e"/><path d="M589,837.6 590,837.6 590,837.6 591,837.6 591,839.8 592,839.8 592,837.3 593,837.3 593,834.0 594,834.0 594,836.6 595,836.6 595,838.3 596,838.3 596,838.5 597,838.5 597,837.5 598,837.5 598,834.9 599,834.9 599,837.3 600,837.3 600,838.6 601,838.6 601,838.9 602,838.9 602,838.4 603,838.4 603,838.2 604,838.2 604,837.5 605,837.5 605,837.6 606,837.6 606,838.6 607,838.6 607,838.8 608,838.8 608,837.1 609,837.1 609,833.8 610,833.8 610,836.9 611,836.9 611,838.3 612,838.3 612,838.8 613,838.8 613,838.9 614,838.9 614,837.8 615,837.8 615,838.6 616,838.6 616,838.6 617,838.6 617,837.0 618,837.0 618,833.4 619,833.4 619,836.6 620,836.6 620,837.7 621,837.7 621,838.7 622,838.7 622,837.5 623,837.5 623,838.3 624,838.3 624,839.3 625,839.3 625,837.8 626,837.8 626,838.0 627,838.0 627,837.6 628,837.6 628,835.2 629,835.2 629,837.7 630,837.7 630,838.0 631,838.0 631,838.7 632,838.7 632,837.5 633,837.5 633,837.6 634,837.6 634,838.7 635,838.7 635,838.1 636,838.1 636,838.2 637,838.2 637,837.1 638,837.1 638,833.0 639,833.0 639,836.8 640,836.8 640,837.7 641,837.7 641,838.2 642,838.2 642,837.9 643,837.9 643,838.7 644,838.7 644,837.8 645,837.8 645,837.7 646,837.7 646,838.8 647,838.8 647,837.4 648,837.4 648,834.0 649,834.0 649,837.5 650,837.5 650,838.4 651,838.4 651,838.7 652,838.7 652,837.1 653,837.1 653,833.7 654,833.7 654,836.3 655,836.3 655,837.7 656,837.7 656,839.1 657,839.1 657,837.7 658,837.7 658,839.1 659,839.1 659,837.6 660,837.6 660,838.2 661,838.2 661,838.7 662,838.7 662,838.7 663,838.7 663,837.8 664,837.8 664,835.4 665,835.4 665,837.1 666,837.1 666,838.3 667,838.3 667,838.7 668,838.7 668,837.7 669,837.7 669,838.4 670,838.4 670,839.1 671,839.1 671,837.9 672,837.9 672,837.0 673,837.0 673,833.8 674,833.8 674,837.1 675,837.1 675,838.1 676,838.1 676,838.9 677,838.9 677,838.3 678,838.3 678,839.2 679,839.2 679,839.1 680,839.1 680,837.8 681,837.8 681,837.2 682,837.2 682,833.6 683,833.6 683,837.4 684,837.4 684,837.7 685,837.7 685,838.5 686,838.5 686,837.4 687,837.4 687,834.1 688,834.1 688,837.5 689,837.5 689,838.2 690,838.2 690,838.3 691,838.3 691,839.0 692,839.0 692,838.3 693,838.3 693,838.9 694,838.9 694,837.6 695,837.6 695,839.8 696,839.8 696,838.1 697,838.1 697,837.6 698,837.6 698,835.2 699,835.2 699,837.0 700,837.0 700,838.3 701,838.3 701,838.4 702,838.4 702,838.2 703,838.2 703,838.8 704,838.8 704,839.4 705,839.4 705,837.5 706,837.5 706,839.5 707,839.5 707,839.8 708,839.8 708,839.1 709,839.1 709,838.4 710,838.4 710,838.1 711,838.1 711,837.0 712,837.0 712,832.9 713,832.9 713,836.7 714,836.7 714,838.2 715,838.2 715,838.1 716,838.1 716,838.1 717,838.1 717,837.7 718,837.7 718,838.1 719,838.1 719,837.8 720,837.8 720,837.7 721,837.7 721,834.5 722,834.5 722,837.4 723,837.4 723,838.3 724,838.3 724,838.8 725,838.8 725,838.9 726,838.9 726,838.7 727,838.7 727,837.8 728,837.8 728,839.6 729,839.6 729,838.5 730,838.5 730,837.6 731,837.6 731,835.2 732,835.2 732,837.4 733,837.4 733,837.6 734,837.6 734,838.9 735,838.9 735,838.4 736,838.4 736,838.9 737,838.9 737,838.6 738,838.6 738,838.6 739,838.6 739,839.6 740,839.6 740,839.8 741,839.8 741,839.8 742,839.8 742,839.5 743,839.5 743,839.7 744,839.7 744,837.6 745,837.6 745,834.7 746,834.7 746,837.2 747,837.2 747,837.7 748,837.7 748,837.5 749,837.5 749,839.3 750,839.3 750,838.8 751,838.8 751,838.6 752,838.6 752,838.5 753,838.5 753,838.4 754,838.4 754,837.2 755,837.2 755,833.5 756,833.5 756,837.3 757,837.3 757,838.2 758,838.2 758,837.3 759,837.3 759,833.8 760,833.8 760,837.1 761,837.1 761,838.0 762,838.0 762,838.8 763,838.8 763,838.2 764,838.2 764,838.9 765,838.9 765,838.7 766,838.7 766,839.5 767,839.5 767,837.4 768,837.4 768,833.8 769,833.8 769,837.4 770,837.4 770,837.8 771,837.8 771,839.0 772,839.0 772,838.4 773,838.4 773,839.1 774,839.1 774,837.7 775,837.7 775,837.6 776,837.6 776,837.5 777,837.5 777,834.1 778,834.1 778,836.8 779,836.8 779,838.2 780,838.2 780,838.7 781,838.7 781,838.9 782,838.9 782,838.6 783,838.6 783,838.5 784,838.5 784,839.7 785,839.7 785,837.4 786,837.4 786,834.7 787,834.7 787,837.1 788,837.1 788,837.7 789,837.7 789,837.3 790,837.3 790,833.8 791,833.8 791,836.7 792,836.7 792,838.0 793,838.0 793,838.7 794,838.7 794,838.3 795,838.3 795,838.7 796,838.7 796,838.7 797,838.7 797,837.9 798,837.9 798,837.3 799,837.3 799,834.5 800,834.5 800,837.3 801,837.3 801,838.6 802,838.6 802,838.5 803,838.5 803,838.8 804,838.8 804,838.5 805,838.5 805,838.5 806,838.5 806,839.2 807,839.2 807,839.0 808,839.0 808,837.7 809,837.7 809,839.7 810,839.7 810,838.1 811,838.1 811,839.4 812,839.4 812,837.3 813,837.3 813,833.5 814,833.5 814,837.3 815,837.3 815,838.1 816,838.1 816,838.3 817,838.3 817,838.5 818,838.5 818,838.9 819,838.9 819,839.4 820,839.4 820,837.9 821,837.9 821,838.4 822,838.4 822,837.6 823,837.6 823,837.2 824,837.2 824,834.3 825,834.3 825,837.1 826,837.1 826,837.8 827,837.8 827,838.2 828,838.2 828,838.6 829,838.6 829,838.5 830,838.5 830,838.8 831,838.8 831,838.0 832,838.0 832,839.3 833,839.3 833,838.6 834,838.6 834,837.5 835,837.5 835,834.5 836,834.5 836,837.3 837,837.3 837,837.7 838,837.7 838,837.9 839,837.9 839,839.2 840,839.2 840,838.7 841,838.7 841,838.7 842,838.7 842,839.3 843,839.3 843,838.9 844,838.9 844,838.3 845,838.3 845,837.7 846,837.7 846,838.5 847,838.5 847,837.9 848,837.9 848,837.1 849,837.1 849,833.0 850,833.0 850,836.9 851,836.9 851,838.0 852,838.0 852,838.5 853,838.5 853,838.8 854,838.8 854,839.0 855,839.0 855,837.8 856,837.8 856,837.5 857,837.5 857,838.3 858,838.3 858,837.5 859,837.5 859,834.9 860,834.9 860,837.1 861,837.1 861,837.9 862,837.9 862,838.3 863,838.3 863,838.8 864,838.8 864,838.6 865,838.6 865,838.6 866,838.6 866,838.6 867,838.6 867,837.6 868,837.6 868,837.1 869,837.1 869,833.4 870,833.4 870,836.4 871,836.4 871,838.2 872,838.2 872,838.3 873,838.3 873,837.8 874,837.8 874,838.4 875,838.4 875,838.2 876,838.2 876,838.9 877,838.9 877,837.5 878,837.5 878,837.1 879,837.1 879,833.5 880,833.5 880,836.5 881,836.5 881,838.6 882,838.6 882,838.7 883,838.7 883,838.5 884,838.5 884,837.8 885,837.8 885,838.9 886,838.9 886,838.7 887,838.7 887,837.7 888,837.7 888,834.8 889,834.8 889,837.5 890,837.5 890,837.7 891,837.7 891,838.2 892,838.2 892,838.5 893,838.5 893,837.6 894,837.6 894,839.0 895,839.0 895,838.1 896,838.1 896,837.7 897,837.7 897,835.1 898,835.1 898,836.9 899,836.9 899,837.9 900,837.9 900,838.4 901,838.4 901,838.7 902,838.7 902,838.3 903,838.3 903,837.6 904,837.6 904,838.4 905,838.4 905,839.9 906,839.9 906,838.8 907,838.8 907,837.4 908,837.4 908,834.4 909,834.4 909,837.3 910,837.3 910,837.9 911,837.9 911,838.5 912,838.5 912,837.6 913,837.6 913,838.1 914,838.1 914,838.4 915,838.4 915,837.7 916,837.7 916,837.8 917,837.8 917,839.7 918,839.7 918,837.7 919,837.7 919,835.0 920,835.0 920,837.5 921,837.5 921,837.9 922,837.9 922,838.5 923,838.5 923,837.3 924,837.3 924,834.0 925,834.0 925,837.5 926,837.5 926,838.3 927,838.3 927,838.7 928,838.7 928,839.1 929,839.1 929,838.5 930,838.5 930,838.8 931,838.8 931,839.4 932,839.4 932,837.6 933,837.6 933,837.4 934,837.4 934,833.9 935,833.9 935,837.0 936,837.0 936,837.9 937,837.9 937,838.3 938,838.3 938,838.1 939,838.1 939,838.7 940,838.7 940,838.3 941,838.3 941,839.1 942,839.1 942,837.3 943,837.3 943,834.2 944,834.2 944,837.2 945,837.2 945,838.6 946,838.6 946,838.1 947,838.1 947,837.2 948,837.2 948,834.2 949,834.2 949,836.7 950,836.7 950,838.6 951,838.6 951,838.3 952,838.3 952,838.0 953,838.0 953,837.8 954,837.8 954,838.9 955,838.9 955,839.5 956,839.5 956,839.0 957,839.0 957,837.2 958,837.2 958,834.2 959,834.2 959,837.1 960,837.1 960,838.1 961,838.1 961,837.6 962,837.6 962,838.6 963,838.6 963,838.5 964,838.5 964,839.0 965,839.0 965,838.8 966,838.8 966,837.8 967,837.8 967,839.2 968,839.2 968,838.3 969,838.3 969,838.7 970,838.7 970,838.6 971,838.6 971,837.1 972,837.1 972,833.4 973,833.4 973,836.3 974,836.3 974,838.6 975,838.6 975,838.3 976,838.3 976,848.8 975,848.8 975,848.5 974,848.5 974,850.4 973,850.4 973,852.9 972,852.9 972,849.8 971,849.8 971,848.0 970,848.0 970,847.9 969,847.9 969,848.3 968,848.3 968,847.5 967,847.5 967,848.9 966,848.9 966,848.4 965,848.4 965,847.8 964,847.8 964,848.4 963,848.4 963,848.3 962,848.3 962,849.6 961,849.6 961,849.1 960,849.1 960,850.0 959,850.0 959,852.7 958,852.7 958,849.5 957,849.5 957,847.7 956,847.7 956,847.4 955,847.4 955,848.0 954,848.0 954,849.2 953,849.2 953,848.8 952,848.8 952,848.6 951,848.6 951,848.5 950,848.5 950,850.0 949,850.0 949,852.8 948,852.8 948,849.5 947,849.5 947,848.6 946,848.6 946,848.2 945,848.2 945,850.0 944,850.0 944,852.6 943,852.6 943,849.6 942,849.6 942,847.7 941,847.7 941,848.9 940,848.9 940,848.5 939,848.5 939,848.8 938,848.8 938,848.8 937,848.8 937,849.3 936,849.3 936,849.5 935,849.5 935,853.4 934,853.4 934,849.8 933,849.8 933,849.6 932,849.6 932,847.3 931,847.3 931,848.1 930,848.1 930,848.0 929,848.0 929,847.5 928,847.5 928,847.8 927,847.8 927,848.3 926,848.3 926,849.3 925,849.3 925,853.2 924,853.2 924,849.7 923,849.7 923,848.8 922,848.8 922,848.9 921,848.9 921,849.8 920,849.8 920,852.1 919,852.1 919,848.8 918,848.8 918,847.1 917,847.1 917,848.7 916,848.7 916,849.1 915,849.1 915,848.2 914,848.2 914,848.6 913,848.6 913,849.5 912,849.5 912,848.1 911,848.1 911,848.5 910,848.5 910,849.1 909,849.1 909,851.7 908,851.7 908,849.3 907,849.3 907,848.1 906,848.1 906,847.1 905,847.1 905,848.6 904,848.6 904,849.1 903,849.1 903,848.3 902,848.3 902,848.5 901,848.5 901,848.1 900,848.1 900,849.1 899,849.1 899,850.4 898,850.4 898,851.3 897,851.3 897,849.3 896,849.3 896,848.8 895,848.8 895,847.9 894,847.9 894,848.9 893,848.9 893,848.5 892,848.5 892,848.8 891,848.8 891,849.3 890,849.3 890,849.6 889,849.6 889,852.3 888,852.3 888,848.9 887,848.9 887,848.5 886,848.5 886,847.7 885,847.7 885,849.4 884,849.4 884,848.1 883,848.1 883,848.2 882,848.2 882,848.6 881,848.6 881,850.4 880,850.4 880,853.3 879,853.3 879,849.6 878,849.6 878,849.8 877,849.8 877,847.6 876,847.6 876,848.8 875,848.8 875,848.2 874,848.2 874,849.2 873,849.2 873,848.8 872,848.8 872,849.1 871,849.1 871,850.7 870,850.7 870,853.7 869,853.7 869,850.0 868,850.0 868,849.0 867,849.0 867,848.6 866,848.6 866,848.0 865,848.0 865,848.5 864,848.5 864,848.2 863,848.2 863,848.8 862,848.8 862,849.3 861,849.3 861,849.9 860,849.9 860,852.4 859,852.4 859,849.0 858,849.0 858,848.2 857,848.2 857,848.9 856,848.9 856,849.3 855,849.3 855,847.7 854,847.7 854,848.4 853,848.4 853,848.2 852,848.2 852,849.0 851,849.0 851,849.8 850,849.8 850,853.6 849,853.6 849,849.8 848,849.8 848,849.3 847,849.3 847,848.0 846,848.0 846,849.2 845,849.2 845,848.3 844,848.3 844,847.8 843,847.8 843,847.5 842,847.5 842,848.3 841,848.3 841,848.4 840,848.4 840,847.6 839,847.6 839,849.2 838,849.2 838,849.1 837,849.1 837,849.2 836,849.2 836,851.8 835,851.8 835,849.5 834,849.5 834,848.6 833,848.6 833,847.9 832,847.9 832,849.1 831,849.1 831,847.8 830,847.8 830,848.3 829,848.3 829,848.1 828,848.1 828,848.6 827,848.6 827,848.8 826,848.8 826,850.0 825,850.0 825,852.0 824,852.0 824,849.2 823,849.2 823,849.4 822,849.4 822,848.4 821,848.4 821,848.9 820,848.9 820,847.7 819,847.7 819,848.3 818,848.3 818,848.0 817,848.0 817,848.5 816,848.5 816,848.9 815,848.9 815,849.9 814,849.9 814,853.9 813,853.9 813,849.4 812,849.4 812,847.3 811,847.3 811,849.1 810,849.1 810,846.9 809,846.9 809,849.3 808,849.3 808,847.9 807,847.9 807,847.9 806,847.9 806,848.2 805,848.2 805,848.5 804,848.5 804,848.3 803,848.3 803,848.6 802,848.6 802,848.3 801,848.3 801,849.9 800,849.9 800,852.0 799,852.0 799,849.7 798,849.7 798,849.3 797,849.3 797,848.4 796,848.4 796,848.5 795,848.5 795,848.3 794,848.3 794,848.2 793,848.2 793,848.5 792,848.5 792,850.0 791,850.0 791,852.8 790,852.8 790,849.1 789,849.1 789,848.8 788,848.8 788,849.6 787,849.6 787,851.4 786,851.4 786,849.5 785,849.5 785,847.1 784,847.1 784,848.6 783,848.6 783,848.3 782,848.3 782,848.0 781,848.0 781,848.2 780,848.2 780,848.5 779,848.5 779,850.5 778,850.5 778,853.2 777,853.2 777,849.6 776,849.6 776,848.8 775,848.8 775,849.1 774,849.1 774,847.6 773,847.6 773,848.6 772,848.6 772,848.0 771,848.0 771,849.2 770,849.2 770,849.6 769,849.6 769,853.3 768,853.3 768,849.7 767,849.7 767,847.1 766,847.1 766,848.4 765,848.4 765,847.8 764,847.8 764,848.5 763,848.5 763,848.0 762,848.0 762,848.8 761,848.8 761,849.4 760,849.4 760,853.1 759,853.1 759,849.7 758,849.7 758,848.7 757,848.7 757,849.9 756,849.9 756,853.7 755,853.7 755,849.5 754,849.5 754,848.4 753,848.4 753,848.3 752,848.3 752,848.1 751,848.1 751,847.8 750,847.8 750,847.7 749,847.7 749,849.3 748,849.3 748,849.3 747,849.3 747,849.5 746,849.5 746,852.4 745,852.4 745,849.1 744,849.1 744,847.1 743,847.1 743,847.5 742,847.5 742,846.9 741,846.9 741,847.4 740,847.4 740,847.3 739,847.3 739,847.9 738,847.9 738,848.3 737,848.3 737,848.1 736,848.1 736,848.4 735,848.4 735,847.7 734,847.7 734,849.4 733,849.4 733,849.2 732,849.2 732,851.3 731,851.3 731,849.1 730,849.1 730,848.5 729,848.5 729,847.5 728,847.5 728,848.8 727,848.8 727,848.2 726,848.2 726,847.9 725,847.9 725,848.1 724,848.1 724,848.8 723,848.8 723,849.9 722,849.9 722,852.6 721,852.6 721,849.1 720,849.1 720,848.9 719,848.9 719,848.6 718,848.6 718,849.4 717,849.4 717,848.3 716,848.3 716,848.5 715,848.5 715,848.5 714,848.5 714,850.2 713,850.2 713,853.1 712,853.1 712,849.7 711,849.7 711,848.6 710,848.6 710,848.8 709,848.8 709,848.0 708,848.0 708,847.0 707,847.0 707,847.6 706,847.6 706,849.2 705,849.2 705,847.4 704,847.4 704,847.8 703,847.8 703,848.8 702,848.8 702,848.7 701,848.7 701,848.5 700,848.5 700,849.5 699,849.5 699,852.1 698,852.1 698,849.0 697,849.0 697,848.4 696,848.4 696,847.1 695,847.1 695,849.6 694,849.6 694,848.2 693,848.2 693,848.7 692,848.7 692,848.1 691,848.1 691,848.5 690,848.5 690,848.9 689,848.9 689,849.6 688,849.6 688,852.1 687,852.1 687,849.4 686,849.4 686,848.3 685,848.3 685,849.1 684,849.1 684,849.4 683,849.4 683,853.4 682,853.4 682,850.1 681,850.1 681,848.8 680,848.8 680,847.9 679,847.9 679,847.5 678,847.5 678,848.4 677,848.4 677,848.3 676,848.3 676,848.6 675,848.6 675,849.4 674,849.4 674,853.5 673,853.5 673,849.6 672,849.6 672,849.3 671,849.3 671,847.8 670,847.8 670,848.5 669,848.5 669,849.2 668,849.2 668,848.2 667,848.2 667,848.4 666,848.4 666,849.5 665,849.5 665,851.4 664,851.4 664,849.4 663,849.4 663,847.9 662,847.9 662,848.5 661,848.5 661,848.6 660,848.6 660,849.5 659,849.5 659,847.7 658,847.7 658,848.7 657,848.7 657,847.9 656,847.9 656,849.0 655,849.0 655,850.8 654,850.8 654,852.9 653,852.9 653,849.5 652,849.5 652,848.2 651,848.2 651,848.8 650,848.8 650,849.5 649,849.5 649,852.6 648,852.6 648,849.2 647,849.2 647,847.9 646,847.9 646,848.9 645,848.9 645,848.8 644,848.8 644,848.4 643,848.4 643,849.4 642,849.4 642,848.7 641,848.7 641,849.1 640,849.1 640,850.4 639,850.4 639,854.2 638,854.2 638,849.9 637,849.9 637,849.0 636,849.0 636,849.0 635,849.0 635,847.9 634,847.9 634,849.7 633,849.7 633,848.9 632,848.9 632,848.4 631,848.4 631,848.6 630,848.6 630,848.9 629,848.9 629,852.0 628,852.0 628,849.2 627,849.2 627,849.2 626,849.2 626,849.5 625,849.5 625,847.6 624,847.6 624,848.4 623,848.4 623,849.4 622,849.4 622,848.5 621,848.5 621,848.8 620,848.8 620,850.4 619,850.4 619,852.7 618,852.7 618,849.8 617,849.8 617,848.1 616,848.1 616,848.5 615,848.5 615,849.5 614,849.5 614,847.9 613,847.9 613,847.8 612,847.8 612,848.4 611,848.4 611,850.3 610,850.3 610,853.1 609,853.1 609,850.2 608,850.2 608,848.3 607,848.3 607,847.9 606,847.9 606,849.0 605,849.0 605,849.2 604,849.2 604,848.9 603,848.9 603,848.6 602,848.6 602,847.7 601,847.7 601,848.4 600,848.4 600,849.3 599,849.3 599,851.6 598,851.6 598,849.3 597,849.3 597,848.5 596,848.5 596,848.6 595,848.6 595,850.4 594,850.4 594,853.0 593,853.0 593,849.2 592,849.2 592,847.2 591,847.2 591,849.6 590,849.6 590,849.1 589,849.1Z" fill="#868686"/></svg>
<svg style="left:0;top:0" width="1118" height="932">
<circle cx="424" cy="897.6" r="10.9" fill="none" stroke="#8a8a8a" stroke-width="2.4"/>
<rect x="419" y="893" width="2.5" height="10" fill="#8a8a8a"/>
<polygon points="422.5,898 429,893 429,903" fill="#8a8a8a"/>
<circle cx="481" cy="897.6" r="22.3" fill="none" stroke="#8a8a8a" stroke-width="5"/>
<rect x="473" y="888" width="5" height="20" fill="#8a8a8a"/>
<rect x="484" y="888" width="5" height="20" fill="#8a8a8a"/>
<circle cx="538" cy="897.6" r="10.9" fill="none" stroke="#8a8a8a" stroke-width="2.4"/>
<rect x="534" y="894" width="8" height="8" fill="#8a8a8a"/>
<circle cx="580" cy="897.6" r="10.9" fill="none" stroke="#8a8a8a" stroke-width="2.4"/>
<polygon points="575,893 581.5,898 575,903" fill="#8a8a8a"/>
<rect x="582.5" y="893" width="2.5" height="10" fill="#8a8a8a"/>
</svg>
<div style="position:absolute;left:0px;top:0px;width:1px;height:719px;background:#060a12"></div>
<div style="position:absolute;left:1px;top:0px;width:1008px;height:719px;background:#ff9000"></div>
<div style="position:absolute;left:3px;top:0px;width:1004px;height:33px;background:#c25e00"></div>
<div style="position:absolute;left:3px;top:33px;width:1004px;height:684px;background:#323232;border:1px solid #262b34"></div>
<div style="position:absolute;left:1009px;top:0px;width:1px;height:719px;background:#0c1018"></div>
<div class="t " style="left:13px;top:9px;">Auto-organize</div>
<svg style="left:0;top:0" width="1118" height="40">
<circle cx="904" cy="16" r="9" fill="#fff"/>
<path d="M901.2,13.6 C901.2,11.9 902.4,10.9 903.9,10.9 C905.5,10.9 906.6,12 906.6,13.4 C906.6,15.6 904.1,15.7 904.1,18.4" fill="none" stroke="#c25e00" stroke-width="1.9"/>
<rect x="903.1" y="20.2" width="2" height="2" fill="#c25e00"/>
<rect x="939" y="10" width="12" height="12" fill="none" stroke="#fff" stroke-width="2"/>
<rect x="938" y="9" width="14" height="3" fill="#fff"/>
<path d="M980.5,10.5 L991.5,21.5 M991.5,10.5 L980.5,21.5" stroke="#fff" stroke-width="1.8"/>
</svg>
<svg style="left:0;top:0" width="60" height="100">
<circle cx="24" cy="59" r="6" fill="none" stroke="#ff9000" stroke-width="2.2"/>
<circle cx="24" cy="59" r="3.5" fill="#ff9000"/>
<circle cx="24" cy="85" r="6" fill="none" stroke="#b0b0b0" stroke-width="2.2"/>
</svg>
<div class="t " style="left:37px;top:51px;">Move and rename files to new destination based on file tags</div>
<div class="t " style="left:37px;top:77px;">Copy files to new destination based on file tags</div>
<div class="t " style="left:19px;top:103px;">Destination:</div>
<div class="t " style="left:90px;top:101px;letter-spacing:-0.15px">&lt;Track #:2&gt;. &lt;Artist&gt; - &lt;Title&gt;</div>
<div style="position:absolute;left:87px;top:117px;width:751px;height:1px;background:#c0c0c0"></div>
<svg style="left:0;top:0" width="1118" height="130"><polygon points="837,109 837,117 829,117" fill="#9a9a9a"/></svg>
<div style="position:absolute;left:839px;top:100px;width:70px;height:17px;background:#3e3e3e;border-radius:3px 3px 0 0"></div>
<div class="t " style="left:867px;top:102px;font-size:11px">&gt;&gt;</div>
<div style="position:absolute;left:913px;top:100px;width:100px;height:17px;background:#3e3e3e;border-radius:3px 3px 0 0"></div>
<div class="t " style="left:916px;top:102px;letter-spacing:-0.5px">CONFIGURE</div>
<div class="t " style="left:19px;top:141px;">Resulting directories and filenames:</div>
<div style="position:absolute;left:15px;top:161px;width:958px;height:25px;background:#232323"></div>
<svg style="left:21px;top:167px" width="14" height="14"><rect x="0" y="0" width="14" height="14" rx="2.5" fill="#ff8c00"/>
<path d="M2.7,7.2 L4.9,9.2 L11.8,2.8" fill="none" stroke="#1c2530" stroke-width="1.5"/></svg>
<svg style="left:21px;top:192px" width="14" height="14"><rect x="0" y="0" width="14" height="14" rx="2.5" fill="#ff8c00"/>
<path d="M2.7,7.2 L4.9,9.2 L11.8,2.8" fill="none" stroke="#1c2530" stroke-width="1.5"/></svg>
<div class="t b" style="left:47px;top:166px;letter-spacing:-0.3px">New Path</div>
<div class="t b" style="left:534px;top:166px;letter-spacing:-0.3px">Old Path</div>
<div class="t " style="left:47px;top:191px;">F:\HDD G Backup\Robert MP3s\76\Summer Hit Mix '99\09. Boney M - Ma Baker.mp3</div>
<div class="t " style="left:534px;top:191px;">F:\HDD G Backup\Robert MP3s\76\Summer Hit Mix '99\09. Boney M - Ma Baker.mp3</div>
<div style="position:absolute;left:15px;top:636px;width:958px;height:10px;background:#bbbbbb"></div>
<div style="position:absolute;left:11px;top:653px;width:14px;height:14px;border:2px solid #8a8a8a;border-radius:2px"></div>
<div class="t " style="left:34px;top:652px;">Delete emptied folders</div>
<div style="position:absolute;left:791px;top:673px;width:96px;height:32px;background:#ff8c00;border-radius:2.5px;box-shadow:0 0 9px 2px rgba(255,150,0,0.6)"></div>
<div class="t " style="left:831px;top:682px;letter-spacing:-0.3px">OK</div>
<div style="position:absolute;left:899px;top:673px;width:110px;height:32px;background:#404040;border-radius:3px"></div>
<div class="t " style="left:924px;top:682px;letter-spacing:-0.6px">CANCEL</div>
<div style="position:absolute;left:839px;top:118px;width:137px;height:307px;background:#2f2f2f;border:1px solid #ababab"></div>
<div class="t " style="left:872px;top:128px;">Auto number</div>
<div class="t " style="left:872px;top:156px;">Random number</div>
<div class="t " style="left:872px;top:184px;">Track folder</div>
<div style="position:absolute;left:841px;top:206px;width:134px;height:2px;background:#b0b0b0"></div>
<div class="t " style="left:872px;top:215px;">Directory</div>
<div class="t " style="left:872px;top:243px;">Splitter</div>
<div style="position:absolute;left:841px;top:266px;width:134px;height:16px;background:#8b8b8b;border-top:1px solid #a9a9a9"></div>
<div class="t " style="left:881px;top:267px;font-size:9.3px;color:#cacaca">ALL FIELDS</div>
<div style="position:absolute;left:841px;top:282px;width:134px;height:28px;background:#4b4b4b"></div>
<div class="t " style="left:872px;top:289px;">Audio</div>
<div class="t " style="left:872px;top:317px;">Video</div>
<div class="t " style="left:872px;top:345px;">Custom</div>
<div class="t " style="left:872px;top:373px;">Properties</div>
<div class="t " style="left:872px;top:401px;">Play History</div>
<svg style="left:0;top:0" width="1118" height="932"><polygon points="960,291.8 964.4,296 960,300.2" fill="#9a9a9a"/><polygon points="960,319.8 964.4,324 960,328.2" fill="#9a9a9a"/><polygon points="960,347.8 964.4,352 960,356.2" fill="#9a9a9a"/><polygon points="960,375.8 964.4,380 960,384.2" fill="#9a9a9a"/><polygon points="960,403.8 964.4,408 960,412.2" fill="#9a9a9a"/></svg>
<div style="position:absolute;left:975px;top:88px;width:143px;height:860px;background:#2f2f2f;border:1px solid #b4b4b4"></div>
<div class="t " style="left:1008px;top:98px;">Album</div>
<div class="t " style="left:1008px;top:126px;">Album Artist</div>
<div class="t " style="left:1008px;top:154px;">Album Volume</div>
<div class="t " style="left:1008px;top:182px;">Author</div>
<div class="t " style="left:1008px;top:210px;">BPM</div>
<div class="t " style="left:1008px;top:238px;">Composer</div>
<div class="t " style="left:1008px;top:266px;">Conductor</div>
<div class="t " style="left:1008px;top:294px;">Copyright</div>
<div class="t " style="left:1008px;top:322px;">Date</div>
<div class="t " style="left:1008px;top:350px;">Disc #</div>
<div class="t " style="left:1008px;top:378px;">Encoder</div>
<div class="t " style="left:1008px;top:406px;">Genre</div>
<div class="t " style="left:1008px;top:434px;">Grouping</div>
<div class="t " style="left:1008px;top:462px;">Initial Key</div>
<div class="t " style="left:1008px;top:490px;">Involved People</div>
<div class="t " style="left:1008px;top:518px;">ISRC</div>
<div class="t " style="left:1008px;top:546px;">Lyricist</div>
<div class="t " style="left:1008px;top:574px;">Original Artist</div>
<div class="t " style="left:1008px;top:602px;">Original Date</div>
<div class="t " style="left:1008px;top:630px;">Original Lyricist</div>
<div class="t " style="left:1008px;top:658px;">Original Title</div>
<div class="t " style="left:1008px;top:686px;">Podcast</div>
<div class="t " style="left:1008px;top:714px;">Producer</div>
<div class="t " style="left:1008px;top:742px;">Publisher</div>
<div class="t " style="left:1008px;top:770px;">Rating</div>
<div class="t " style="left:1008px;top:798px;">Track #</div>
<div class="t " style="left:1008px;top:826px;">Track artist</div>
<div class="t " style="left:1008px;top:854px;">Track title</div>
<div class="t " style="left:1008px;top:882px;">Track Volume</div>
<div style="position:absolute;left:977px;top:904px;width:139px;height:2px;background:#b8b8b8"></div>
<div class="t " style="left:1008px;top:913px;">Classification</div>
<svg style="left:0;top:0" width="1118" height="932"><polygon points="1101,915 1105,919.5 1101,924" fill="#9a9a9a"/></svg>
<svg style="left:0;top:0" width="1118" height="932">
<rect x="994.5" y="818.5" width="94" height="26" rx="1" fill="none" stroke="#f00" stroke-width="1.2"/>
<line x1="992.5" y1="822.5" x2="198" y2="125.3" stroke="#f00" stroke-width="1.15"/>
<polygon points="191,119 202,123.5 197,129.5" fill="#ff0000"/>
</svg>
<svg style="left:856px;top:284px" width="14" height="20"><path d="M0.5,0.5 L0.5,16.5 L4.2,13 L6.8,18.8 L9,17.8 L6.5,12 L11.8,12 Z" fill="#fff" stroke="#000" stroke-width="1"/></svg>
</body></html>
